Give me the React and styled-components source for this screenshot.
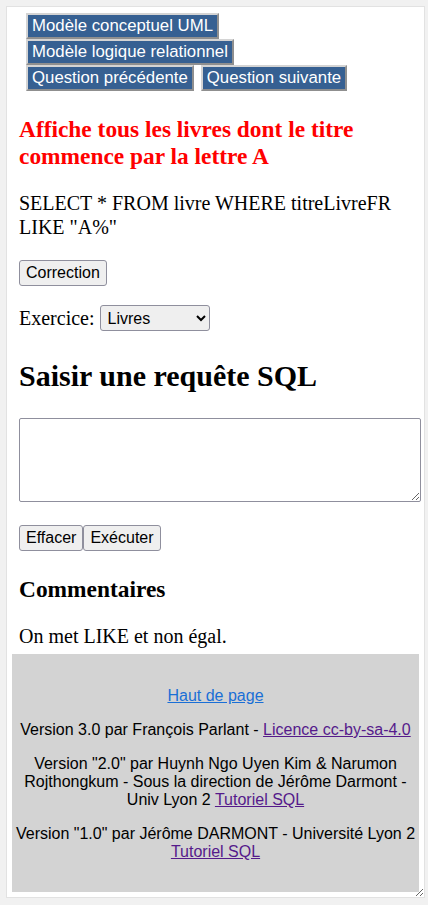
import React, { useState } from 'react';
import styled, { createGlobalStyle } from 'styled-components';

const GlobalStyle = createGlobalStyle`
	html, body {
		margin: 0;
		padding: 0;
		background: #f1f1f1;
	}
	body {
		padding: 6px;
		font-family: 'Liberation Serif', 'Times New Roman', serif;
		color: #000;
	}
`;

const Page = styled.div`
	box-sizing: border-box;
	width: 419px;
	height: 892px;
	background: #fff;
	border: 1px solid #e2e2e2;
	padding: 5px;
	overflow: auto;
	resize: both;
	display: flex;
	flex-direction: column;
`;

const Main = styled.div`
	padding: 0 7px;
	font-size: 20px;
`;

const Nav = styled.nav`
	display: flex;
	flex-direction: column;
	align-items: flex-start;
	padding: 1px 0 0 7px;
`;

const NavRow = styled.div`
	display: flex;
	column-gap: 7px;
`;

const NavButton = styled.a`
	box-sizing: border-box;
	height: 26px;
	display: inline-flex;
	align-items: center;
	padding: 0 4px;
	background: #366092;
	color: #fff;
	font-family: 'Liberation Sans', Arial, sans-serif;
	font-size: 16.8px;
	text-decoration: none;
	border: 2px solid;
	border-color: #d4d4d4 #8f8f8f #8f8f8f #d4d4d4;
	cursor: pointer;
`;

const Question = styled.h3`
	margin: 25px 0 0;
	color: #ff0000;
	font-size: 1.17em;
	line-height: 27px;
	font-weight: bold;
`;

const Sql = styled.p`
	margin: 21px 0 0;
	font-size: 20px;
	line-height: 24px;
`;

const SysButton = styled.button`
	box-sizing: border-box;
	height: 26px;
	padding: 0 6px;
	font-family: 'Liberation Sans', Arial, sans-serif;
	font-size: 16px;
	color: #000;
	background: #efefef;
	border: 1px solid #8f8f9d;
	border-radius: 3px;
	cursor: pointer;
	&:hover {
		background: #e5e5e5;
	}
`;

const Row = styled.div`
	display: flex;
	align-items: center;
	margin-top: ${(p) => p.$mt || 0}px;
`;

const Label = styled.label`
	font-size: 20px;
	margin-right: 5px;
`;

const Select = styled.select`
	box-sizing: border-box;
	width: 110px;
	height: 26px;
	font-family: 'Liberation Sans', Arial, sans-serif;
	font-size: 16px;
	color: #000;
	background: #efefef;
	border: 1px solid #8f8f9d;
	border-radius: 3px;
	padding: 0 3px;
`;

const Heading = styled.h2`
	margin: 28px 0 0;
	font-size: 1.5em;
	line-height: 34px;
	font-weight: bold;
`;

const Editor = styled.textarea`
	box-sizing: border-box;
	display: block;
	width: 402px;
	height: 84px;
	margin-top: 25px;
	border: 1px solid #8f8f9d;
	border-radius: 2px;
	font-family: 'Liberation Mono', monospace;
	font-size: 14px;
`;

const SubHeading = styled.h3`
	margin: 25px 0 0;
	font-size: 1.17em;
	line-height: 27px;
	font-weight: bold;
`;

const Comment = styled.p`
	margin: 21px 0 6px;
	font-size: 20px;
	line-height: 24px;
`;

const Footer = styled.footer`
	flex: 0 0 auto;
	background: #d3d3d3;
	padding: 17px 0 15px;
	text-align: center;
	font-family: 'Liberation Sans', Arial, sans-serif;
	font-size: 16px;
	line-height: 18px;
	color: #000;
`;

const FooterLine = styled.p`
	margin: 16px 0;
`;

const Link = styled.a`
	color: ${(p) => (p.$visited ? '#551a8b' : '#1a6fd6')};
	text-decoration: underline;
	cursor: pointer;
`;

const App = () => {
	const [sql, setSql] = useState('');
	const [exercise, setExercise] = useState('livres');

	return (
		<>
			<GlobalStyle />
			<Page>
				<Main>
					<Nav>
						<NavButton>Modèle conceptuel UML</NavButton>
						<NavButton>Modèle logique relationnel</NavButton>
						<NavRow>
							<NavButton>Question précédente</NavButton>
							<NavButton>Question suivante</NavButton>
						</NavRow>
					</Nav>
					<Question>Affiche tous les livres dont le titre commence par la lettre A</Question>
					<Sql>SELECT * FROM livre WHERE titreLivreFR LIKE "A%"</Sql>
					<Row $mt={21}>
						<SysButton>Correction</SysButton>
					</Row>
					<Row $mt={19}>
						<Label>Exercice:</Label>
						<Select value={exercise} onChange={(e) => setExercise(e.target.value)}>
							<option value="livres">Livres</option>
							<option value="films">Films</option>
						</Select>
					</Row>
					<Heading>Saisir une requête SQL</Heading>
					<Editor value={sql} onChange={(e) => setSql(e.target.value)} />
					<Row $mt={23}>
						<SysButton onClick={() => setSql('')}>Effacer</SysButton>
						<SysButton>Exécuter</SysButton>
					</Row>
					<SubHeading>Commentaires</SubHeading>
					<Comment>On met LIKE et non égal.</Comment>
				</Main>
				<Footer>
					<FooterLine>
						<Link>Haut de page</Link>
					</FooterLine>
					<FooterLine>
						Version 3.0 par François Parlant - <Link $visited>Licence cc-by-sa-4.0</Link>
					</FooterLine>
					<FooterLine>
						Version "2.0" par Huynh Ngo Uyen Kim &amp; Narumon Rojthongkum - Sous la direction de
						Jérôme Darmont - Univ Lyon 2 <Link $visited>Tutoriel SQL</Link>
					</FooterLine>
					<FooterLine>
						Version "1.0" par Jérôme DARMONT - Université Lyon 2 <Link $visited>Tutoriel SQL</Link>
					</FooterLine>
				</Footer>
			</Page>
		</>
	);
};

export default App;
